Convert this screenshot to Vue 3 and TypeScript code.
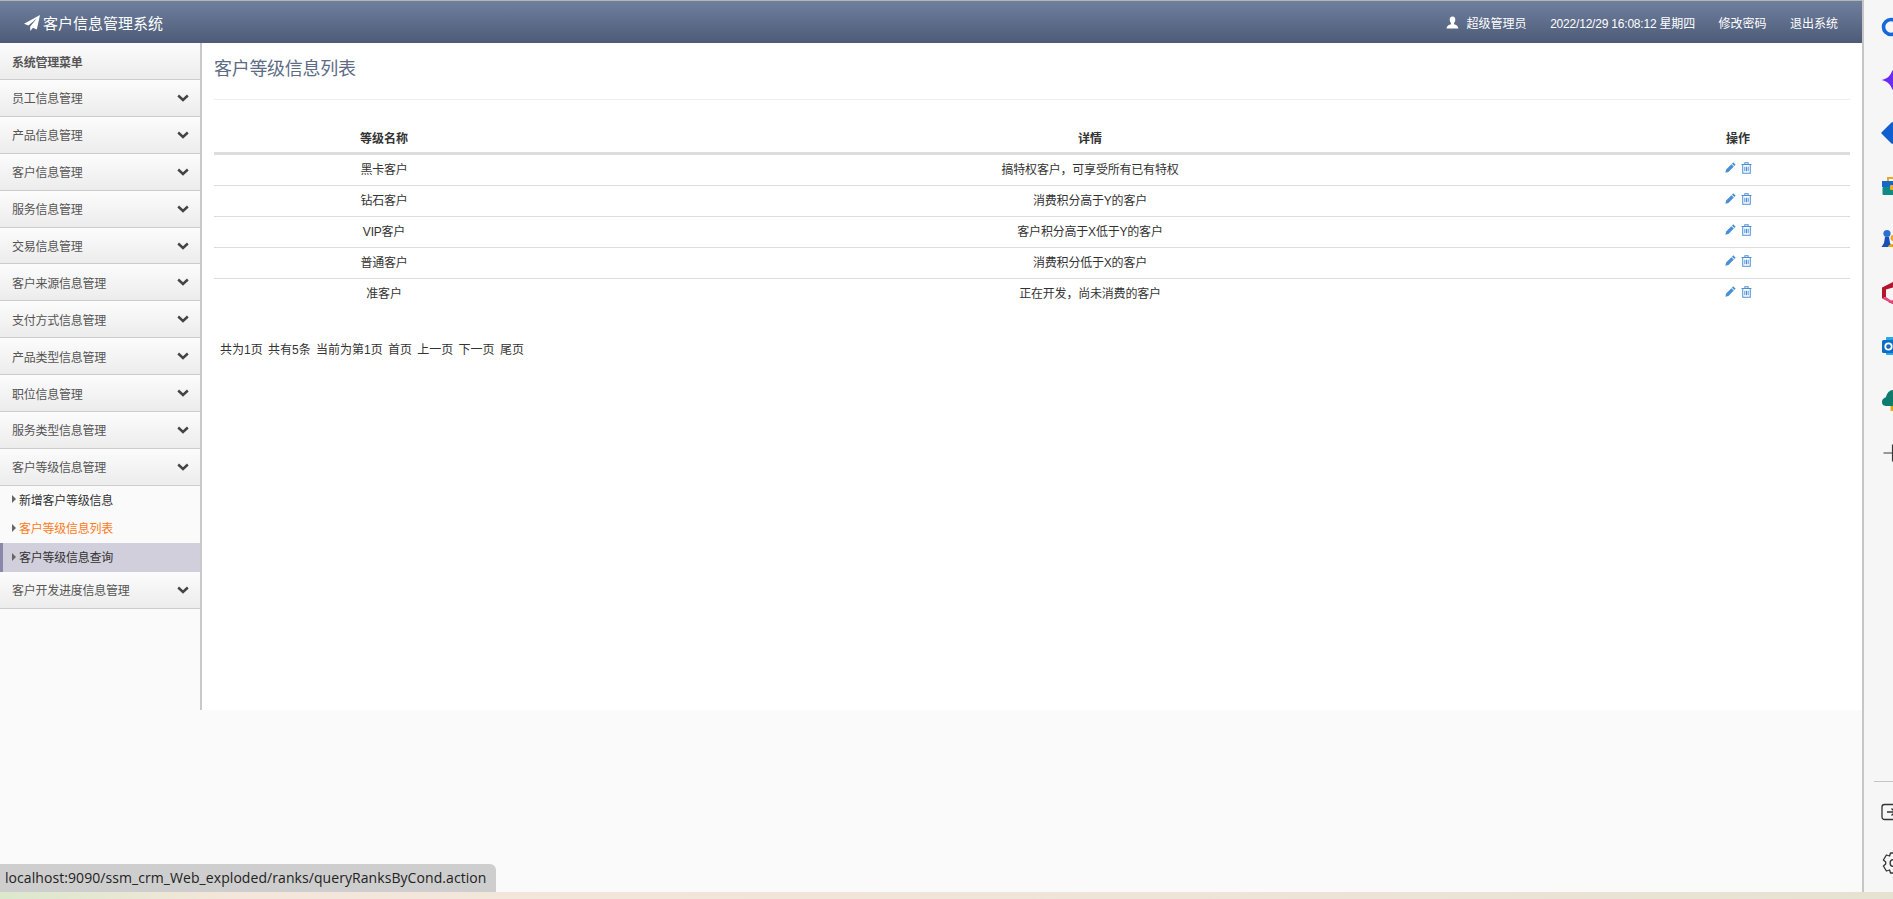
<script setup lang="ts">
const menus = [
  "员工信息管理",
  "产品信息管理",
  "客户信息管理",
  "服务信息管理",
  "交易信息管理",
  "客户来源信息管理",
  "支付方式信息管理",
  "产品类型信息管理",
  "职位信息管理",
  "服务类型信息管理",
  "客户等级信息管理",
];

const subMenus = [
  { text: "新增客户等级信息", cls: "" },
  { text: "客户等级信息列表", cls: "current" },
  { text: "客户等级信息查询", cls: "hover" },
];

const ranks = [
  { name: "黑卡客户", detail: "搞特权客户，可享受所有已有特权" },
  { name: "钻石客户", detail: "消费积分高于Y的客户" },
  { name: "VIP客户", detail: "客户积分高于X低于Y的客户" },
  { name: "普通客户", detail: "消费积分低于X的客户" },
  { name: "准客户", detail: "正在开发，尚未消费的客户" },
];

const pager = ["共为1页", "共有5条", "当前为第1页", "首页", "上一页", "下一页", "尾页"];
</script>

<template>
  <div class="page">
    <div class="main">
      <header class="topbar">
        <div class="brand">
          <svg class="plane" viewBox="0 0 16 16" width="16" height="16">
            <path d="M16 0 L0 8.8 L4.4 10.6 L13 3.2 L6.2 11.4 L6.2 16 L9 12.8 L12.8 14.4 Z" fill="#fff" />
          </svg>
          <span>客户信息管理系统</span>
        </div>
        <div class="top-right">
          <span class="user">
            <svg viewBox="0 0 14 14" width="13" height="13">
              <path d="M7 0.5 C9.2 0.5 10.2 2.2 10 4.4 C9.9 6 9.2 7 8.6 7.8 L8.7 8.9 C10.6 9.7 13 10.2 13.4 13.4 L0.6 13.4 C1 10.2 3.4 9.7 5.3 8.9 L5.4 7.8 C4.8 7 4.1 6 4 4.4 C3.8 2.2 4.8 0.5 7 0.5 Z" fill="#fff" />
            </svg>
            超级管理员
          </span>
          <span class="clock">2022/12/29 16:08:12 星期四</span>
          <span>修改密码</span>
          <span>退出系统</span>
        </div>
      </header>

      <div class="body">
        <aside class="sidebar">
          <div class="menu-head">系统管理菜单</div>
          <div v-for="m in menus" :key="m" class="menu-item">
            <span>{{ m }}</span>
            <svg class="chevron" viewBox="0 0 12 8" width="12" height="8">
              <path d="M1.2 1.5 L6 6 L10.8 1.5" fill="none" stroke="#444" stroke-width="2.4" />
            </svg>
          </div>
          <ul class="sub-menu">
            <li v-for="s in subMenus" :key="s.text" :class="s.cls">
              <i class="arrow"></i>{{ s.text }}
            </li>
          </ul>
          <div class="menu-item">
            <span>客户开发进度信息管理</span>
            <svg class="chevron" viewBox="0 0 12 8" width="12" height="8">
              <path d="M1.2 1.5 L6 6 L10.8 1.5" fill="none" stroke="#444" stroke-width="2.4" />
            </svg>
          </div>
        </aside>

        <section class="content">
          <h3 class="title">客户等级信息列表</h3>
          <table class="rank-table">
            <colgroup>
              <col style="width: 340px" />
              <col style="width: 1072px" />
              <col style="width: 224px" />
            </colgroup>
            <thead>
              <tr>
                <th>等级名称</th>
                <th>详情</th>
                <th>操作</th>
              </tr>
            </thead>
            <tbody>
              <tr v-for="r in ranks" :key="r.name">
                <td>{{ r.name }}</td>
                <td>{{ r.detail }}</td>
                <td class="op-cell">
                  <span class="ops">
                    <svg viewBox="0 0 12 12" width="11" height="11">
                      <path d="M9 0.4 L11.6 3 L10.2 4.4 L7.6 1.8 Z M7 2.4 L9.6 5 L3.8 10.8 L0.4 11.6 L1.2 8.2 Z" fill="#4a8fd6" />
                    </svg>
                    <svg viewBox="0 0 12 13" width="11" height="12">
                      <path d="M0.6 2.6 H11.4 M4.2 2.4 V0.7 H7.8 V2.4 M1.9 2.8 V12.3 H10.1 V2.8 M4.2 5 V10 M6 5 V10 M7.8 5 V10" fill="none" stroke="#4a8fd6" stroke-width="1.1" />
                    </svg>
                  </span>
                </td>
              </tr>
            </tbody>
          </table>
          <div class="pager">
            <span v-for="p in pager" :key="p">{{ p }}</span>
          </div>
        </section>
      </div>
    </div>

    <nav class="rail">
      <div class="rail-item">
        <svg viewBox="0 0 24 24" width="24" height="24">
          <circle cx="10" cy="12" r="7.5" fill="none" stroke="#1667d9" stroke-width="3.6" />
        </svg>
      </div>
      <div class="rail-item">
        <svg viewBox="0 0 24 24" width="24" height="24">
          <path d="M0.5 12 C6 11 9.5 8 11.5 2 C13.5 8 17 11 23 12 C17 13 13.5 16 11.5 22 C9.5 16 6 13 0.5 12 Z" fill="#6a2cf0" />
        </svg>
      </div>
      <div class="rail-item">
        <svg viewBox="0 0 24 24" width="24" height="24">
          <path d="M1 12 L11 2 H24 V22 H11 Z" fill="#0f5fd0" stroke="#0f5fd0" stroke-width="1.5" stroke-linejoin="round" />
        </svg>
      </div>
      <div class="rail-item">
        <svg viewBox="0 0 24 24" width="24" height="24">
          <path d="M7 7 V3 H17 V7" fill="none" stroke="#e9a820" stroke-width="2" />
          <rect x="1" y="6" width="22" height="6" fill="#1769c9" />
          <rect x="1.5" y="12" width="21" height="8" rx="1" fill="#0f8a86" />
          <rect x="9" y="10" width="6" height="5" rx="1" fill="#f0b020" />
        </svg>
      </div>
      <div class="rail-item">
        <svg viewBox="0 0 24 24" width="24" height="24">
          <circle cx="6" cy="5.5" r="3.6" fill="#2c6fd0" />
          <path d="M4 9 H8 L9 15 L11 19 H0.5 L3 15 Z" fill="#1650b8" />
          <circle cx="12.5" cy="10" r="3" fill="#e9a820" />
          <path d="M7 19 C7 15 18 15 18 19 Z" fill="#e9a820" />
        </svg>
      </div>
      <div class="rail-item">
        <svg viewBox="0 0 24 24" width="24" height="24">
          <path d="M1 6.5 L12 1 L23 6 V18 L12 23 L7 21 L14 19 V6 L5 8.5 V16 L1 17.5 Z" fill="#b3162c" />
          <path d="M1 17.5 L5 16 L10 19.4 L14 19 L12 23 Z" fill="#e8457c" />
        </svg>
      </div>
      <div class="rail-item">
        <svg viewBox="0 0 24 24" width="24" height="24">
          <rect x="5" y="3" width="19" height="18" rx="1" fill="#28a8ea" />
          <rect x="1" y="6" width="13" height="13" rx="1.5" fill="#0f6cc4" />
          <circle cx="7.5" cy="12.5" r="3.2" fill="none" stroke="#fff" stroke-width="1.8" />
        </svg>
      </div>
      <div class="rail-item">
        <svg viewBox="0 0 24 24" width="24" height="24">
          <rect x="9.5" y="17" width="3.5" height="6" fill="#e9a820" />
          <path d="M1 14 C1 11 3.5 10 5 9 C6 5 8.5 2 12 2 C17 2 19 6 19 9 C21 10 23 12 23 14 C23 17 20 18 17 18 H6 C3 18 1 17 1 14 Z" fill="#0d7c6c" />
        </svg>
      </div>
      <div class="rail-item">
        <svg viewBox="0 0 24 24" width="24" height="24">
          <path d="M2.5 12 H21 M11.5 3.5 V20.5" fill="none" stroke="#3a3a3a" stroke-width="1.2" />
        </svg>
      </div>
      <div class="rail-bottom">
        <div class="rail-line"></div>
        <div class="rail-row">
          <svg viewBox="0 0 24 24" width="24" height="24">
            <rect x="1" y="4.5" width="20" height="15" rx="2.5" fill="none" stroke="#333" stroke-width="1.3" />
            <path d="M6 12 H14 M10.5 8.5 L14 12 L10.5 15.5" fill="none" stroke="#333" stroke-width="1.3" />
          </svg>
        </div>
        <div class="rail-row">
          <svg viewBox="0 0 24 24" width="24" height="24">
            <circle cx="12.5" cy="12" r="3.4" fill="none" stroke="#333" stroke-width="1.3" />
            <path d="M9.5 2 H15.5 L16.4 5 L19.6 4 L22.6 9 L20.3 11 V13 L22.6 15 L19.6 20 L16.4 19 L15.5 22 H9.5 L8.6 19 L5.4 20 L2.4 15 L4.7 13 V11 L2.4 9 L5.4 4 L8.6 5 Z" fill="none" stroke="#333" stroke-width="1.3" stroke-linejoin="round" />
          </svg>
        </div>
      </div>
    </nav>

    <div class="status-link">localhost:9090/ssm_crm_Web_exploded/ranks/queryRanksByCond.action</div>
    <div class="strip"></div>
  </div>
</template>

<style scoped>
.page {
  position: relative;
  display: flex;
  width: 1893px;
  height: 899px;
  overflow: hidden;
  background: #fafafa;
  font-family: "Liberation Sans", "Noto Sans CJK SC", sans-serif;
  font-size: 12px;
  color: #333;
}

.main {
  width: 1862px;
  flex-shrink: 0;
}

.topbar {
  display: flex;
  align-items: center;
  justify-content: space-between;
  box-sizing: border-box;
  height: 43px;
  padding: 1px 24px 0;
  border-top: 1px solid #b5b5b5;
  background: linear-gradient(#6f7f9e, #4d5b77);
  color: #fff;
}

.brand {
  display: flex;
  align-items: center;
  gap: 3px;
  font-size: 15px;
}

.top-right {
  display: flex;
  align-items: center;
  gap: 23.5px;
}

.clock {
  letter-spacing: -0.2px;
}

.user {
  display: flex;
  align-items: center;
  gap: 8px;
}

.body {
  display: flex;
  height: 667px;
}

.sidebar {
  width: 200px;
  flex-shrink: 0;
  border-right: 2px solid #c8c8c8;
  background: #fafafa;
  color: #555;
  letter-spacing: -0.25px;
}

.menu-head,
.menu-item {
  display: flex;
  align-items: center;
  justify-content: space-between;
  box-sizing: border-box;
  height: 36.9px;
  padding: 0 11px 0 12px;
  border-bottom: 1px solid #ccc;
  background: linear-gradient(#fcfcfc, #ececec);
}

.menu-head {
  height: 37px;
  font-weight: bold;
}

.sub-menu {
  margin: 0;
  padding: 0;
  list-style: none;
  color: #333;
}

.sub-menu li {
  display: flex;
  align-items: center;
  box-sizing: border-box;
  height: 28.7px;
  padding: 0 0 2px 12px;
}

.sub-menu .current {
  color: #ff7a1a;
}

.sub-menu .hover {
  padding-left: 9px;
  border-left: 3px solid #8a88a8;
  background: #d0cfdb;
}

.arrow {
  width: 0;
  height: 0;
  margin-right: 3px;
  border-top: 4px solid transparent;
  border-bottom: 4px solid transparent;
  border-left: 4px solid #666;
}

.content {
  flex: 1;
  padding: 0 12px;
  background: #fff;
}

.title {
  box-sizing: border-box;
  height: 57px;
  margin: 0;
  padding-top: 12px;
  border-bottom: 1px solid #eee;
  font-size: 18px;
  font-weight: normal;
  letter-spacing: -0.3px;
  line-height: 28px;
  color: #5d6b85;
}

.rank-table {
  width: 100%;
  margin-top: 22px;
  border-collapse: collapse;
  table-layout: fixed;
  text-align: center;
}

th {
  height: 29px;
  padding: 1px 0 0;
  border-bottom: 3px solid #ddd;
}

td {
  height: 26px;
  padding: 0 0 4px;
  border-bottom: 1px solid #ddd;
  letter-spacing: -0.2px;
}

td.op-cell {
  padding-bottom: 2px;
}

tbody tr:last-child td {
  border-bottom: none;
}

.ops {
  display: inline-flex;
  align-items: center;
  gap: 5px;
}

.pager {
  display: flex;
  gap: 5.3px;
  margin-top: 31px;
  padding-left: 6px;
}

.rail {
  display: flex;
  flex-direction: column;
  box-sizing: border-box;
  width: 31px;
  height: 892px;
  overflow: hidden;
  border-left: 2px solid #c6c6c6;
  background: #f6f6f6;
}

.rail-item {
  display: flex;
  align-items: center;
  flex-shrink: 0;
  height: 53.3px;
  padding-left: 17px;
}

.rail-item svg,
.rail-row svg {
  flex-shrink: 0;
}

.rail-bottom {
  margin-top: auto;
  padding-bottom: 4px;
}

.rail-line {
  height: 1px;
  margin: 0 0 4px 10px;
  background: #c4c4c4;
}

.rail-row {
  display: flex;
  align-items: center;
  height: 51px;
  padding-left: 17px;
}

.status-link {
  position: absolute;
  left: 0;
  bottom: 7px;
  box-sizing: border-box;
  width: 496px;
  height: 28px;
  padding: 0 0 0 5px;
  border-top-right-radius: 6px;
  background: #cecece;
  font-family: "Open Sans", "Noto Sans", sans-serif;
  font-size: 14px;
  letter-spacing: 0.07px;
  line-height: 28px;
  color: #222;
}

.strip {
  position: absolute;
  left: 0;
  right: 0;
  bottom: 0;
  height: 7px;
  background: linear-gradient(90deg, #dbe8cc 0, #f4e6da 12%, #efe4d8 60%, #e6e2d2 100%);
}
</style>
